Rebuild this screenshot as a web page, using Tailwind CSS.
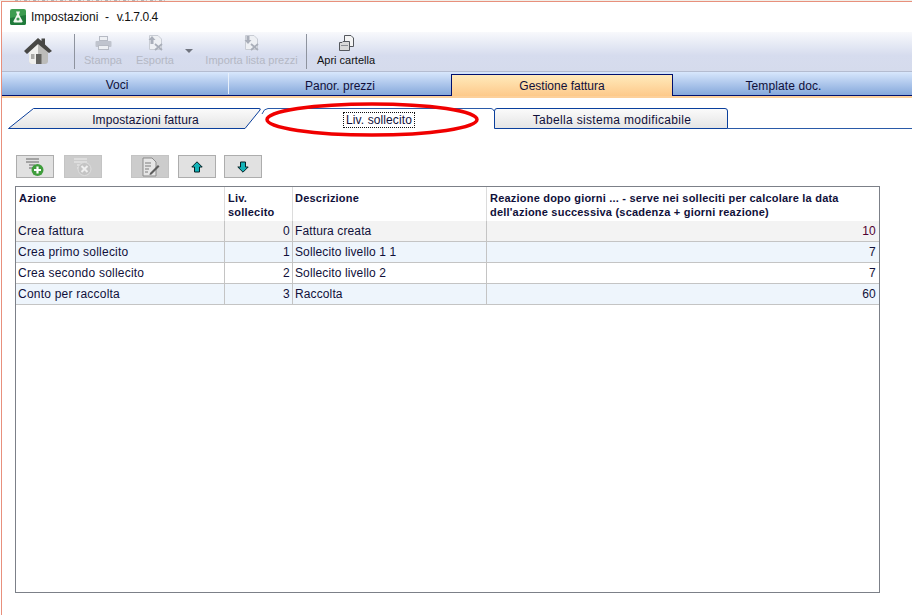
<!DOCTYPE html>
<html lang="it">
<head>
<meta charset="UTF-8">
<title>Impostazioni</title>
<script src="https://cdn.jsdelivr.net/npm/@tailwindcss/browser@4"></script>
</head>
<body class="bg-white">
<div class="relative w-[912px] h-[615px] overflow-hidden bg-white font-['Liberation_Sans',Arial,sans-serif] text-[#10103a]">

  <!-- bordo finestra -->
  <div class="h-[1px] pl-[15px] bg-[#f1efe9]">
    <div class="w-[150px] h-[1px] bg-[repeating-linear-gradient(90deg,#b5b5b5_0_3px,#e8e8e8_3px_5px,#c5c5c5_5px_6px,#f1efe9_6px_9px)]"></div>
  </div>
  <div class="ml-[1px] border-l border-t border-[#e8907c] h-[614px] flex flex-col">

    <!-- titolo -->
    <div class="h-[30px] flex items-center pl-[8px] gap-[5px] text-[12px] text-[#111]">
      <svg width="16" height="16" viewBox="0 0 16 16">
        <rect width="16" height="16" rx="2" fill="#3d9c50"/>
        <path d="M0 9 L16 6 V14 a2 2 0 0 1-2 2 H2 a2 2 0 0 1-2-2Z" fill="#1f7a3a"/>
        <path d="M6 2.500 h4 L9 5.500 L12.500 12 a1 1 0 0 1-1 1.500 H4.500 a1 1 0 0 1-1-1.500 L7 5.500Z" fill="#f2f7f0"/>
        <circle cx="8" cy="10" r="1.600" fill="#3b9a52"/>
      </svg>
      <span>Impostazioni&nbsp; -&nbsp; <span class="ml-[1px] tracking-[-0.45px]">v.1.7.0.4</span></span>
    </div>

    <!-- barra strumenti -->
    <div class="h-[40px] flex items-stretch bg-gradient-to-b from-[#f8f9fc] via-[#d6dcee] via-60% to-[#d5dbec] border-b border-[#b4bcd0] text-[11px]">
      <div class="w-[72px] flex items-center justify-center">
        <svg width="30" height="30" viewBox="0 0 30 30" class="mb-[1px]">
          <path d="M6 15 L15 7 L25 14 V25 Q25 28 22 28 H9 Q6 28 6 25Z" fill="#bcbcba"/>
          <path d="M6 15 L15 8 V28 H9 Q6 28 6 25Z" fill="#f0f0ee"/>
          <rect x="13" y="18" width="5.500" height="10" fill="#62625f"/>
          <rect x="8" y="18" width="3.500" height="5" fill="#a9a9a6"/>
          <path d="M1 15 L15 2 L18.500 5 V2.500 H22 V8.500 L29 15 L26 17 L15 8 L4 18Z" fill="#474745"/>
        </svg>
      </div>
      <div class="w-[1px] bg-[#8e939e] my-[2px]"></div>

      <div class="w-[56px] flex flex-col items-center justify-end pb-[3px] text-[#b4b8c4]">
        <svg width="17" height="16" viewBox="0 0 17 16" class="mb-[1px]">
          <rect x="4.500" y="1.500" width="8" height="4" fill="#eef0f4" stroke="#b6bac4"/>
          <rect x=".5" y="6" width="16" height="6" rx="1" fill="#c0c4ce"/>
          <rect x="3.500" y="10.500" width="10" height="4" fill="#eef0f4" stroke="#b6bac4"/>
        </svg>
        <span>Stampa</span>
      </div>
      <div class="w-[48px] flex flex-col items-center justify-end pb-[3px] text-[#b4b8c4]">
        <svg width="17" height="16" viewBox="0 0 17 16" class="mb-[1px]">
          <path d="M2.500 .5 H11 L14.500 4 V14.500 H2.500Z" fill="#eef0f4" stroke="#c8ccd4"/>
          <path d="M5 1 L8.500 5 H6.500 V9 H3.500 V5 H1.500Z" fill="#a9aeb9"/>
          <path d="M8 9 L15 15 M15 9 L8 15" stroke="#a9aeb9" stroke-width="1.800"/>
        </svg>
        <span>Esporta</span>
      </div>
      <div class="w-[20px] flex justify-center pt-[17px]">
        <div class="w-0 h-0 border-x-[4px] border-x-transparent border-t-[4px] border-t-[#70747f]"></div>
      </div>
      <div class="w-[105px] flex flex-col items-center justify-end pb-[3px] text-[#b4b8c4]">
        <svg width="17" height="16" viewBox="0 0 17 16" class="mb-[1px]">
          <path d="M2.500 .5 H11 L14.500 4 V14.500 H2.500Z" fill="#eef0f4" stroke="#c8ccd4"/>
          <path d="M5 9 L8.500 5 H6.500 V1 H3.500 V5 H1.500Z" fill="#a9aeb9"/>
          <path d="M8 9 L15 15 M15 9 L8 15" stroke="#a9aeb9" stroke-width="1.800"/>
        </svg>
        <span class="whitespace-nowrap">Importa lista prezzi</span>
      </div>
      <div class="w-[2px]"></div>
      <div class="w-[1px] bg-[#8e939e] my-[2px]"></div>
      <div class="w-[78px] flex flex-col items-center justify-end pb-[3px] text-[#111]">
        <svg width="17" height="17" viewBox="0 0 17 17">
          <path d="M6.500 .5 H13 L15.500 3 V11.500 H6.500Z" fill="#f4f4f4" stroke="#55585e"/>
          <path d="M1.500 7.500 H4 L5 6.500 H11.500 V15.500 H1.500Z" fill="#d9d9d9" stroke="#55585e"/>
          <path d="M3 10.500 H10" stroke="#8b8e94"/>
        </svg>
        <span class="whitespace-nowrap">Apri cartella</span>
      </div>
    </div>

    <!-- schede principali -->
    <div class="h-[24px] flex items-stretch bg-gradient-to-b from-[#d8e7fc] to-[#86a8db] border-b border-[#00106e] text-[12px]">
      <div class="w-[227px] flex items-center justify-center pl-[4px] pt-[3px] border-r border-[#e8f0fb] my-[1px]">Voci</div>
      <div class="w-[222px] flex items-center justify-center pt-[4px]">Panor. prezzi</div>
      <div class="w-[222px] -mb-[1px] mt-[2px] flex items-center justify-center bg-gradient-to-b from-[#ffeabb] to-[#fdc98a] border-x border-t border-[#00106e]">Gestione fattura</div>
      <div class="flex-1 flex items-center justify-center pr-[18px] pt-[4px] tracking-[0.1px]">Template doc.</div>
    </div>
    <div class="h-[2px] bg-[#fdd09a]"></div>

    <!-- sotto schede -->
    <div class="h-[21px] mt-[10px] flex text-[12px] relative">
      <svg class="absolute left-[-2px] top-0" width="912" height="21" viewBox="0 0 912 21">
        <defs>
          <linearGradient id="tg" x1="0" y1="0" x2="0" y2="1">
            <stop offset="0" stop-color="#fbfbfb"/>
            <stop offset="1" stop-color="#e4e4e4"/>
          </linearGradient>
        </defs>
        <path d="M8.500 20.500 L33.500 .5 H259 Q261 .5 260 2 L245 20.500Z" fill="url(#tg)" stroke="#0a3f9c"/>
        <path d="M262 6 Q264 .5 268 .5 H491 Q493 .5 494 3" fill="#fff" stroke="#2a5aa8"/>
        <path d="M494.500 20.500 V3 Q494.500 .5 497 .5 H725 Q727.500 .5 727.500 3 V20.500Z" fill="url(#tg)" stroke="#0a3f9c"/>
        <path d="M727.500 20.500 H912" stroke="#2a5aa8"/>
      </svg>
      <div class="relative w-[243px] ml-[6px] flex items-center justify-center pl-[32px] pt-[2px] tracking-[0.1px]">Impostazioni fattura</div>
      <div class="relative w-[249px] flex items-center justify-center pl-[7px] pt-[2px] tracking-[0.1px]"><span class="border border-dotted border-[#111] px-[2px] leading-[14px]">Liv. sollecito</span></div>
      <div class="relative w-[233px] flex items-center justify-center pr-[9px] pt-[2px] tracking-[0.33px]">Tabella sistema modificabile</div>
    </div>

    <!-- pulsanti -->
    <div class="h-[23px] mt-[26px] ml-[14px] flex">
      <button class="w-[38px] h-[23px] flex items-center justify-center bg-[#e1e1e1] border border-[#adadad]">
        <svg width="20" height="20" viewBox="0 0 20 20">
          <path d="M1 2 H14 M1 5 H14 M4 8 H10 M4 11 H8" stroke="#8f8f8f" stroke-width="1.500"/>
          <circle cx="12.500" cy="13" r="6" fill="#3f9d3c"/>
          <path d="M12.500 9.500 V16.500 M9 13 H16" stroke="#fff" stroke-width="2.200"/>
        </svg>
      </button>
      <button class="w-[38px] h-[23px] ml-[10px] flex items-center justify-center bg-[#cccccc] border border-[#c4c4c4]">
        <svg width="20" height="20" viewBox="0 0 20 20">
          <path d="M1 2 H14 M1 5 H14 M4 8 H10 M4 11 H8" stroke="#e2e2e2" stroke-width="1.500"/>
          <circle cx="11.500" cy="12" r="6.500" fill="#c4c4c4" stroke="#dedede"/>
          <path d="M8.500 9 L14.500 15 M14.500 9 L8.500 15" stroke="#efefef" stroke-width="2"/>
        </svg>
      </button>
      <button class="w-[38px] h-[23px] ml-[29px] flex items-center justify-center bg-[#cccccc] border border-[#c4c4c4]">
        <svg width="20" height="20" viewBox="0 0 20 20">
          <path d="M3 1 H12 L16 5 V19 H3Z" fill="#e6e6e6" stroke="#8a8a8a"/>
          <path d="M5 6 H11 M5 9 H11 M5 12 H9 M5 15 H8" stroke="#7d7d7d"/>
          <path d="M10 16 L18 8 L19.500 9.500 L11.500 17.500 L9.500 18Z" fill="#5d5d5d"/>
        </svg>
      </button>
      <button class="w-[38px] h-[23px] ml-[9px] flex items-center justify-center bg-[#e1e1e1] border border-[#adadad]">
        <svg width="12" height="12" viewBox="0 0 12 12">
          <path d="M6 .8 L11.200 6 H8.500 V11 H3.500 V6 H.8Z" fill="#12b3b8" stroke="#062024"/>
        </svg>
      </button>
      <button class="w-[38px] h-[23px] ml-[8px] flex items-center justify-center bg-[#e1e1e1] border border-[#adadad]">
        <svg width="12" height="12" viewBox="0 0 12 12">
          <path d="M6 11.200 L11.200 6 H8.500 V1 H3.500 V6 H.8Z" fill="#12b3b8" stroke="#062024"/>
        </svg>
      </button>
    </div>

    <!-- tabella -->
    <div class="w-[865px] h-[407px] mt-[8px] ml-[13px] border border-[#7c8088] text-[12px] tracking-[0.22px]">
      <div class="grid grid-cols-[209px_68px_194px_1fr] h-[34px] font-bold text-[11px] leading-[14px] tracking-[0.21px] bg-white">
        <div class="pt-[4px] pl-[3px] border-r border-[#dcdcdc]">Azione</div>
        <div class="pt-[4px] pl-[3px] border-r border-[#dcdcdc]">Liv.<br>sollecito</div>
        <div class="pt-[4px] pl-[2px] border-r border-[#dcdcdc]">Descrizione</div>
        <div class="pt-[4px] pl-[3px]">Reazione dopo giorni ... - serve nei solleciti per calcolare la data<br>dell'azione successiva (scadenza + giorni reazione)</div>
      </div>

      <div class="grid grid-cols-[209px_68px_194px_1fr] h-[21px] items-stretch bg-[#f3f3f3] border-b border-[#c4c4c4] leading-[21px]">
        <div class="pl-[2px] border-r border-[#c4c4c4]">Crea fattura</div>
        <div class="pr-[2px] text-right border-r border-[#c4c4c4]">0</div>
        <div class="pl-[2px] tracking-[0.12px] border-r border-[#c4c4c4]">Fattura creata</div>
        <div class="pr-[3px] text-right text-[#500030]">10</div>
      </div>
      <div class="grid grid-cols-[209px_68px_194px_1fr] h-[21px] items-stretch bg-[#eef5fc] border-b border-[#c4c4c4] leading-[21px]">
        <div class="pl-[2px] border-r border-[#c4c4c4]">Crea primo sollecito</div>
        <div class="pr-[2px] text-right border-r border-[#c4c4c4]">1</div>
        <div class="pl-[2px] tracking-[0.12px] border-r border-[#c4c4c4]">Sollecito livello 1 1</div>
        <div class="pr-[3px] text-right">7</div>
      </div>
      <div class="grid grid-cols-[209px_68px_194px_1fr] h-[21px] items-stretch bg-white border-b border-[#c4c4c4] leading-[21px]">
        <div class="pl-[2px] border-r border-[#c4c4c4]">Crea secondo sollecito</div>
        <div class="pr-[2px] text-right border-r border-[#c4c4c4]">2</div>
        <div class="pl-[2px] tracking-[0.12px] border-r border-[#c4c4c4]">Sollecito livello 2</div>
        <div class="pr-[3px] text-right">7</div>
      </div>
      <div class="grid grid-cols-[209px_68px_194px_1fr] h-[21px] items-stretch bg-[#eef5fc] border-b border-[#c4c4c4] leading-[21px]">
        <div class="pl-[2px] border-r border-[#c4c4c4]">Conto per raccolta</div>
        <div class="pr-[2px] text-right border-r border-[#c4c4c4]">3</div>
        <div class="pl-[2px] tracking-[0.12px] border-r border-[#c4c4c4]">Raccolta</div>
        <div class="pr-[3px] text-right">60</div>
      </div>
    </div>
  </div>

  <!-- cerchio rosso -->
  <svg class="absolute left-[264px] top-[101px] pointer-events-none" width="216" height="37" viewBox="0 0 216 37">
    <ellipse cx="108" cy="18.500" rx="105" ry="15.500" fill="none" stroke="#f00000" stroke-width="3.500"/>
  </svg>
</div>
</body>
</html>
